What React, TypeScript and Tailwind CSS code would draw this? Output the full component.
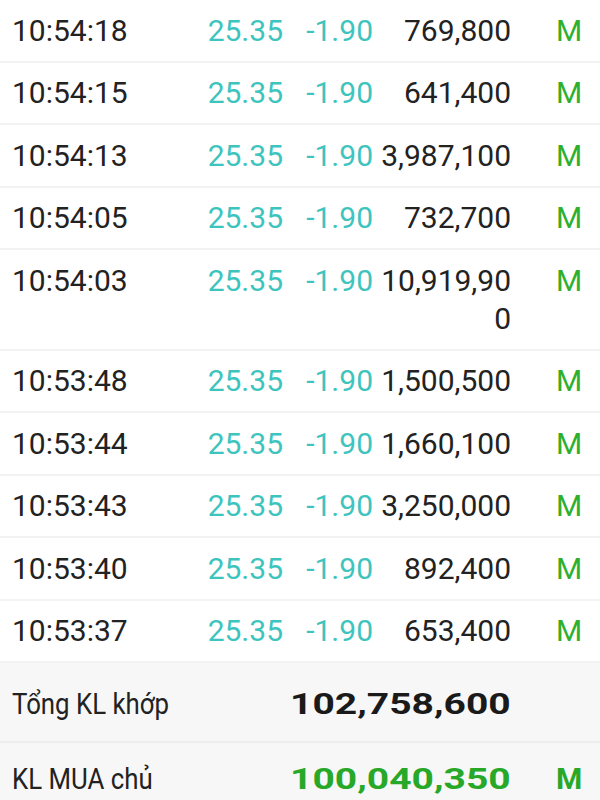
import React from "react";

const rows: [string, string][] = [
  ["10:54:18", "769,800"],
  ["10:54:15", "641,400"],
  ["10:54:13", "3,987,100"],
  ["10:54:05", "732,700"],
  ["10:54:03", "10,919,900"],
  ["10:53:48", "1,500,500"],
  ["10:53:44", "1,660,100"],
  ["10:53:43", "3,250,000"],
  ["10:53:40", "892,400"],
  ["10:53:37", "653,400"],
];

export default function App() {
  return (
    <div
      className="w-[600px] h-[800px] overflow-hidden bg-white text-[30px] leading-[38px] text-[#222]"
      style={{ fontFamily: "Roboto, 'Liberation Sans', sans-serif" }}
    >
      {rows.map(([t, v]) => (
        <div
          key={t}
          className="flex items-start pl-[12px] pt-[11.5px] pb-[11px] border-b-2 border-[#f3f3f3]"
        >
          <div className="w-[188px] shrink-0">{t}</div>
          <div className="w-[83px] shrink-0 text-right text-[#3ec4be]">25.35</div>
          <div className="w-[90px] shrink-0 text-right text-[#3ec4be]">-1.90</div>
          <div className="w-[138px] shrink-0 text-right break-all">{v}</div>
          <div className="pl-[45px] text-[#2db02d]">M</div>
        </div>
      ))}
      <div className="bg-[#f7f7f7]">
        <div className="flex items-start pl-[12px] pt-[22px] pb-[18px] border-b-2 border-[#ededed]">
          <div className="w-[284px] shrink-0">
            <span className="inline-block origin-left scale-x-[0.86]">Tổng KL khớp</span>
          </div>
          <div className="w-[215px] shrink-0 text-right font-bold text-[#1a1a1a]">
            <span className="inline-block origin-right scale-x-[1.3]">102,758,600</span>
          </div>
        </div>
        <div className="flex items-start pl-[12px] pt-[17px] pb-[20px]">
          <div className="w-[284px] shrink-0">
            <span className="inline-block origin-left scale-x-[0.86]">KL MUA chủ</span>
          </div>
          <div className="w-[215px] shrink-0 text-right font-bold text-[#28a828]">
            <span className="inline-block origin-right scale-x-[1.3]">100,040,350</span>
          </div>
          <div className="pl-[45px] font-bold text-[#28a828]">M</div>
        </div>
      </div>
    </div>
  );
}
